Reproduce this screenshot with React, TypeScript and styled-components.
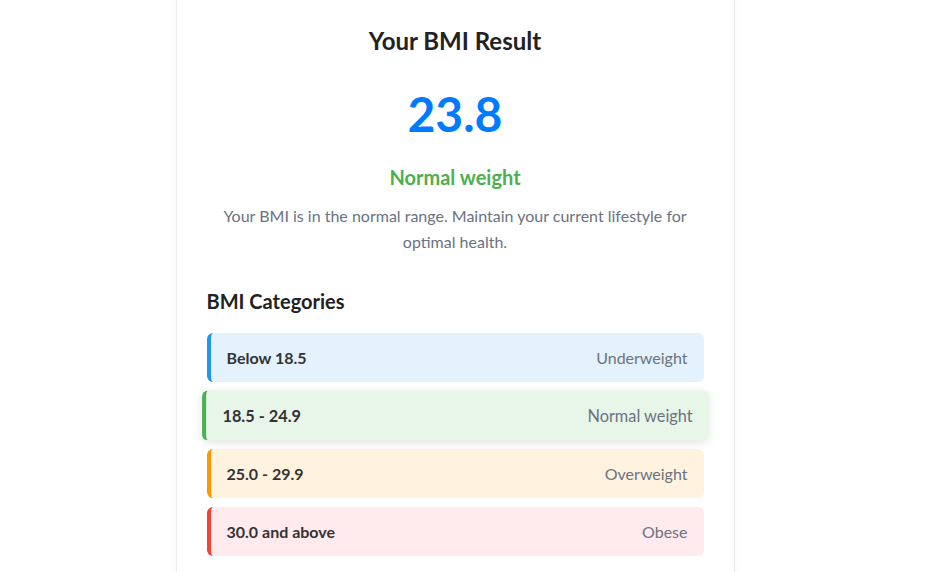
import React from "react";
import styled, { createGlobalStyle } from "styled-components";

const GlobalStyle = createGlobalStyle`
  * { box-sizing: border-box; }
  html, body { margin: 0; padding: 0; background: #ffffff; }
  body {
    font-family: Lato, "Noto Sans", sans-serif;
    color: #222;
    overflow: hidden;
  }
`;

type Category = {
  range: string;
  label: string;
  accent: string;
  bg: string;
  active?: boolean;
};

const categories: Category[] = [
  { range: "Below 18.5", label: "Underweight", accent: "#2196f3", bg: "#e3f2fd" },
  { range: "18.5 - 24.9", label: "Normal weight", accent: "#4caf50", bg: "#e8f5e9", active: true },
  { range: "25.0 - 29.9", label: "Overweight", accent: "#ff9800", bg: "#fff3e0" },
  { range: "30.0 and above", label: "Obese", accent: "#f44336", bg: "#ffebee" },
];

const App = () => {
  return (
    <>
      <GlobalStyle />
      <Page>
        <Card>
          <Title>Your BMI Result</Title>
          <Value>23.8</Value>
          <Status>Normal weight</Status>
          <Description>
            Your BMI is in the normal range. Maintain your current lifestyle for
            optimal health.
          </Description>
          <SectionTitle>BMI Categories</SectionTitle>
          <List>
            {categories.map((c) => (
              <Item key={c.range} $accent={c.accent} $bg={c.bg} $active={c.active}>
                <Range>{c.range}</Range>
                <Label>{c.label}</Label>
              </Item>
            ))}
          </List>
        </Card>
      </Page>
    </>
  );
};

export default App;

const Page = styled.main`
  display: flex;
  justify-content: center;
  align-items: flex-start;
  height: 572px;
  overflow: hidden;
  padding-right: 28px;
`;

const Card = styled.section`
  flex: none;
  width: 559px;
  margin-top: -20px;
  padding: 46px 30px 60px;
  background: #fff;
  border: 1px solid #ececec;
  border-radius: 8px;
  box-shadow: 0 2px 10px rgba(0, 0, 0, 0.04);
  text-align: center;
`;

const Title = styled.h2`
  margin: 0;
  font-size: 24px;
  font-weight: 700;
  line-height: 28px;
  color: #222;
`;

const Value = styled.div`
  margin-top: 27px;
  font-size: 48px;
  font-weight: 700;
  line-height: 64px;
  color: #007bff;
`;

const Status = styled.div`
  margin-top: 18px;
  font-size: 20px;
  font-weight: 700;
  line-height: 26px;
  color: #4caf50;
`;

const Description = styled.p`
  margin: 13px 0 0;
  font-size: 16px;
  line-height: 26px;
  color: #6b7280;
`;

const SectionTitle = styled.h3`
  margin: 33px 0 0;
  text-align: left;
  font-size: 20px;
  font-weight: 700;
  line-height: 26px;
  color: #222;
`;

const List = styled.div`
  display: flex;
  flex-direction: column;
  gap: 9px;
  margin-top: 19px;
`;

const Item = styled.div<{ $accent: string; $bg: string; $active?: boolean }>`
  display: flex;
  align-items: center;
  justify-content: space-between;
  height: 49px;
  padding: 0 16px 0 16px;
  background: ${(p) => p.$bg};
  border-left: 4px solid ${(p) => p.$accent};
  border-radius: 6px;
  transform: ${(p) => (p.$active ? "scale(1.02)" : "none")};
  box-shadow: ${(p) => (p.$active ? "0 2px 8px rgba(0, 0, 0, 0.1)" : "none")};
`;

const Range = styled.span`
  font-size: 16px;
  font-weight: 700;
  color: #333;
`;

const Label = styled.span`
  font-size: 16px;
  color: #6b7280;
`;
